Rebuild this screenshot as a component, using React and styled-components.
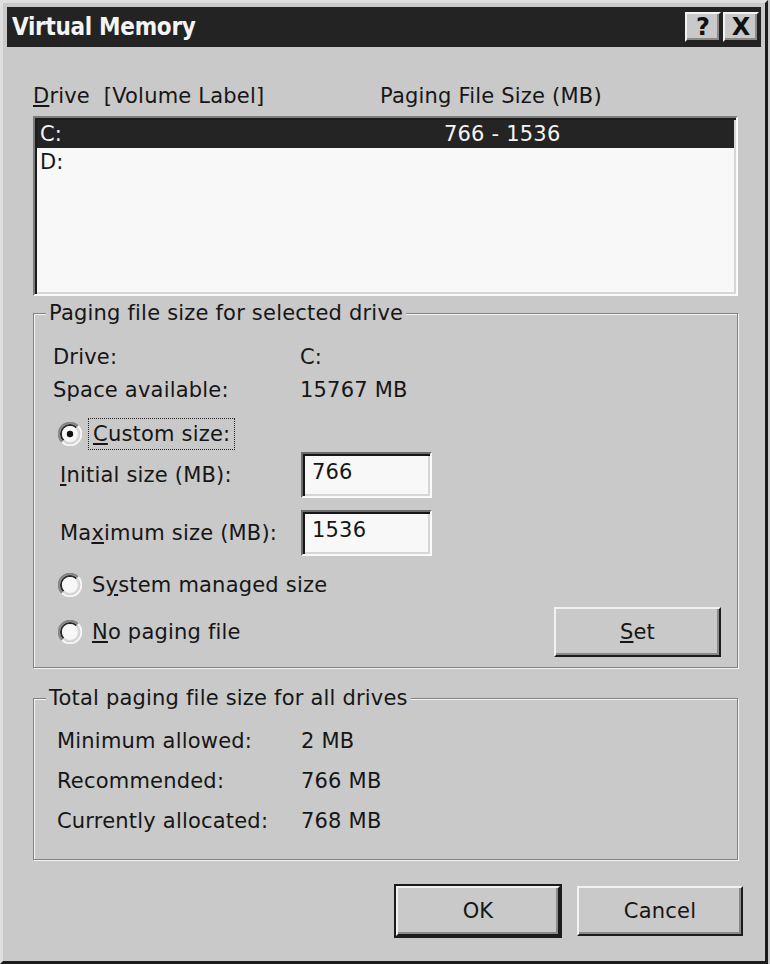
import styled, { createGlobalStyle } from 'styled-components'

const Global = createGlobalStyle`
    html, body {
        margin: 0;
        padding: 0;
        background: #c9c9c9;
    }
    body {
        font-family: "DejaVu Sans", "Liberation Sans", sans-serif;
        color: #161616;
        letter-spacing: 0.2px;
    }
`

const Window = styled.div`
    width: 768px;
    height: 964px;
    box-sizing: border-box;
    background: #c9c9c9;
    border-top: 3px solid #dedede;
    border-left: 3px solid #dedede;
    border-right: 3px solid #1c1c1c;
    border-bottom: 3px solid #1c1c1c;
    padding: 4px;
    display: flex;
    flex-direction: column;
`
const TitleBar = styled.div`
    height: 40px;
    background: #232323;
    display: flex;
    align-items: center;
    padding: 0 2px 0 5px;
`
const Title = styled.div`
    flex: 1;
    color: #f4f4f4;
    font-family: "DejaVu Sans Condensed", "DejaVu Sans", sans-serif;
    font-weight: bold;
    font-size: 24px;
    letter-spacing: -0.3px;
`
const TitleButton = styled.div`
    width: 36px;
    height: 30px;
    box-sizing: border-box;
    margin-left: 2px;
    background: #c9c9c9;
    border-top: 2px solid #f2f2f2;
    border-left: 2px solid #f2f2f2;
    border-right: 2px solid #222;
    border-bottom: 2px solid #222;
    box-shadow: inset -2px -2px 0 #8a8a8a;
    display: flex;
    align-items: center;
    justify-content: center;
    font-weight: bold;
    font-size: 24px;
    color: #111;
`
const Body = styled.div`
    display: flex;
    flex-direction: column;
    padding: 0 23px 0 26px;
`
const ListHeader = styled.div`
    margin-top: 36px;
    height: 26px;
    line-height: 26px;
    display: grid;
    grid-template-columns: 347px 1fr;
    font-size: 21px;
`
const ListBox = styled.div`
    margin-top: 7px;
    height: 180px;
    box-sizing: border-box;
    background: #f8f8f8;
    border: 2px solid;
    border-color: #7c7c7c #fafafa #fafafa #7c7c7c;
    box-shadow: inset 2px 2px 0 #1c1c1c, inset -2px -2px 0 #d6d6d6;
    padding: 2px;
`
const ListRow = styled.div`
    height: 28px;
    line-height: 28px;
    display: grid;
    grid-template-columns: 404px 1fr;
    padding-left: 3px;
    font-size: 21px;
    background: ${p => (p.$selected ? '#242424' : 'transparent')};
    color: ${p => (p.$selected ? '#f4f4f4' : '#161616')};
`
const Group = styled.fieldset`
    margin: ${p => p.$top}px 0 0;
    padding: ${p => p.$pt}px 16px ${p => p.$pb}px 18px;
    border: 1px solid #828282;
    box-shadow: 1px 1px 0 #f4f4f4, inset 1px 1px 0 #f4f4f4;
    min-width: 0;
    display: flex;
    flex-direction: column;
`
const Legend = styled.legend`
    font-size: 21px;
    line-height: 26px;
    padding: 0 3px;
    margin-left: -6px;
    background: #c9c9c9;
`
const InfoRow = styled.div`
    display: grid;
    grid-template-columns: ${p => p.$col}px 1fr;
    padding-left: ${p => p.$indent}px;
    height: ${p => p.$h}px;
    align-items: center;
    font-size: 21px;
`
const RadioRow = styled.div`
    display: flex;
    align-items: center;
    justify-content: space-between;
    margin-top: ${p => p.$top}px;
    height: ${p => p.$h}px;
    padding-left: 6px;
`
const RadioLabel = styled.div`
    display: flex;
    align-items: center;
    gap: 10px;
    font-size: 21px;
`
const Focus = styled.span`
    outline: 1px dotted #222;
    outline-offset: 3px;
    padding: 0 1px;
`
const FieldRow = styled.div`
    display: grid;
    grid-template-columns: 241px 131px;
    align-items: center;
    padding-left: 8px;
    margin-top: ${p => p.$top}px;
    height: 46px;
    font-size: 21px;
`
const TextBox = styled.input`
    width: 131px;
    height: 46px;
    box-sizing: border-box;
    border: 2px solid;
    border-color: #6c6c6c #fafafa #fafafa #6c6c6c;
    box-shadow: inset 2px 2px 0 #161616, inset -2px -2px 0 #d6d6d6;
    background: #f8f8f8;
    font-family: inherit;
    letter-spacing: inherit;
    font-size: 21px;
    color: #161616;
    padding: 0 0 6px 9px;
    outline: none;
`
const Button = styled.div`
    width: ${p => p.$w}px;
    height: 50px;
    box-sizing: border-box;
    background: #c9c9c9;
    border-top: 2px solid #f2f2f2;
    border-left: 2px solid #f2f2f2;
    border-right: 2px solid #1c1c1c;
    border-bottom: 2px solid #1c1c1c;
    box-shadow: inset -2px -2px 0 #8a8a8a${p => (p.$default ? ', 0 0 0 2px #1c1c1c' : '')};
    display: flex;
    align-items: center;
    justify-content: center;
    font-size: 21px;
    color: #161616;
`
const ButtonRow = styled.div`
    display: flex;
    justify-content: flex-end;
    gap: 17px;
    margin: 26px -5px 0 0;
`

function Radio({ checked }) {
    return (
        <svg width="24" height="24" viewBox="0 0 24 24">
            <path d="M20 4 A11 11 0 0 0 4 20" fill="none" stroke="#858585" strokeWidth="2" />
            <path d="M4 20 A11 11 0 0 0 20 4" fill="none" stroke="#f6f6f6" strokeWidth="2" />
            <path d="M18.4 5.6 A9 9 0 0 0 5.6 18.4" fill="none" stroke="#2a2a2a" strokeWidth="2" />
            <path d="M5.6 18.4 A9 9 0 0 0 18.4 5.6" fill="none" stroke="#d8d8d8" strokeWidth="2" />
            <circle cx="12" cy="12" r="8" fill="#f8f8f8" />
            {checked && <circle cx="12" cy="12" r="3.2" fill="#111" />}
        </svg>
    )
}

function App() {
    return (
        <>
            <Global />
            <Window>
                <TitleBar>
                    <Title>Virtual Memory</Title>
                    <TitleButton>?</TitleButton>
                    <TitleButton>X</TitleButton>
                </TitleBar>
                <Body>
                    <ListHeader>
                        <span><u>D</u>rive&nbsp;&nbsp;[Volume Label]</span>
                        <span>Paging File Size (MB)</span>
                    </ListHeader>
                    <ListBox>
                        <ListRow $selected>
                            <span>C:</span>
                            <span>766 - 1536</span>
                        </ListRow>
                        <ListRow>
                            <span>D:</span>
                            <span></span>
                        </ListRow>
                    </ListBox>

                    <Group $top={4} $pt={14} $pb={10}>
                        <Legend>Paging file size for selected drive</Legend>
                        <InfoRow $col={247} $indent={1} $h={33}>
                            <span>Drive:</span>
                            <span>C:</span>
                        </InfoRow>
                        <InfoRow $col={247} $indent={1} $h={33}>
                            <span>Space available:</span>
                            <span>15767 MB</span>
                        </InfoRow>
                        <RadioRow $top={10} $h={36}>
                            <RadioLabel>
                                <Radio checked />
                                <Focus><u>C</u>ustom size:</Focus>
                            </RadioLabel>
                        </RadioRow>
                        <FieldRow $top={0}>
                            <span><u>I</u>nitial size (MB):</span>
                            <TextBox readOnly value="766" />
                        </FieldRow>
                        <FieldRow $top={12}>
                            <span>Ma<u>x</u>imum size (MB):</span>
                            <TextBox readOnly value="1536" />
                        </FieldRow>
                        <RadioRow $top={14} $h={30}>
                            <RadioLabel>
                                <Radio />
                                <span>S<u>y</u>stem managed size</span>
                            </RadioLabel>
                        </RadioRow>
                        <RadioRow $top={6} $h={51}>
                            <RadioLabel>
                                <Radio />
                                <span><u>N</u>o paging file</span>
                            </RadioLabel>
                            <Button $w={167}><u>S</u>et</Button>
                        </RadioRow>
                    </Group>

                    <Group $top={17} $pt={10} $pb={18}>
                        <Legend>Total paging file size for all drives</Legend>
                        <InfoRow $col={244} $indent={5} $h={40}>
                            <span>Minimum allowed:</span>
                            <span>2 MB</span>
                        </InfoRow>
                        <InfoRow $col={244} $indent={5} $h={40}>
                            <span>Recommended:</span>
                            <span>766 MB</span>
                        </InfoRow>
                        <InfoRow $col={244} $indent={5} $h={40}>
                            <span>Currently allocated:</span>
                            <span>768 MB</span>
                        </InfoRow>
                    </Group>

                    <ButtonRow>
                        <Button $w={164} $default>OK</Button>
                        <Button $w={166}>Cancel</Button>
                    </ButtonRow>
                </Body>
            </Window>
        </>
    )
}

export default App
